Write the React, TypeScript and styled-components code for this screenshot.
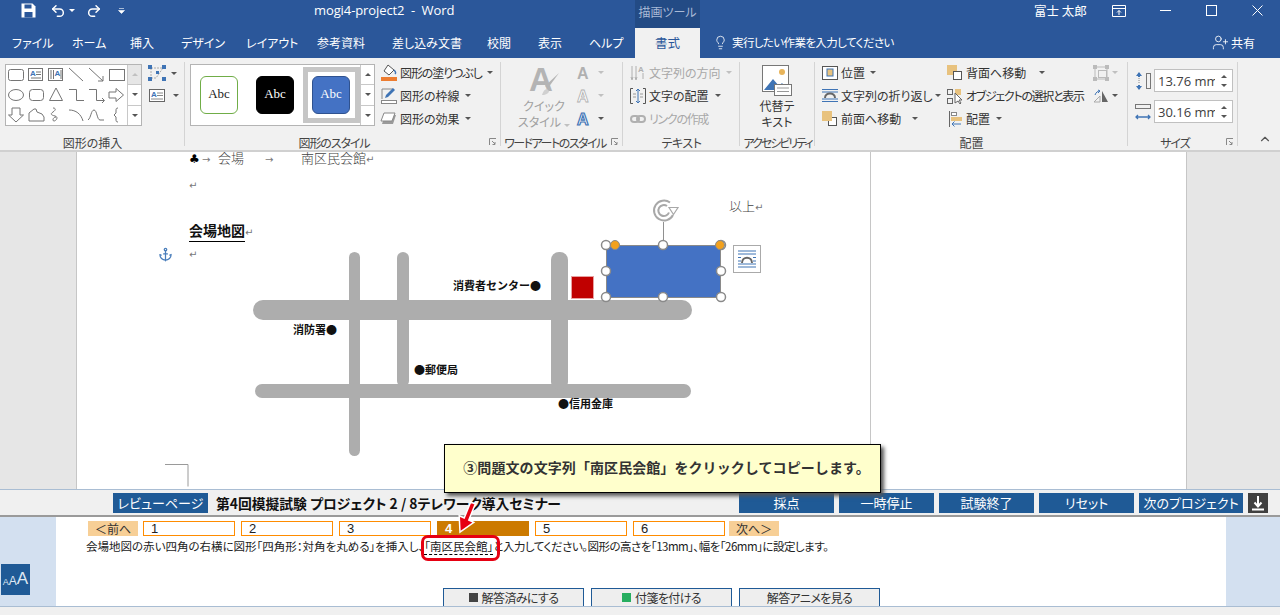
import { ReactNode } from 'react'
import styled, { createGlobalStyle } from 'styled-components'
import { Anchor, Lightbulb, ChevronUp, UserPlus, Undo2, Redo2 } from 'lucide-react'

const GlobalStyle = createGlobalStyle`
  html, body { margin: 0; padding: 0; background: #fff; }
  body { font-family: "Noto Sans CJK JP", "Noto Sans", sans-serif; }
  * { box-sizing: border-box; }
`

const BLUE = '#2b579a'
const NAVY = '#1f5a96'

const Root = styled.div`
  position: relative;
  width: 1280px;
  height: 615px;
  overflow: hidden;
  display: flex;
  flex-direction: column;
  font-feature-settings: "palt";
`

/* title bar */
const TitleBar = styled.div`
  position: relative;
  height: 28px;
  background: ${BLUE};
  color: #fff;
  display: flex;
  align-items: flex-start;
  padding-left: 21px;
  flex-shrink: 0;
`
const QuickIcon = styled.span<{ $w: number }>`
  width: ${(p) => p.$w}px;
  height: 21px;
  display: flex;
  align-items: center;
  color: #fff;
  flex-shrink: 0;
`
const DocTitle = styled.div`
  margin-left: 189px;
  width: 321px;
  height: 21px;
  line-height: 21px;
  font-family: "Open Sans", sans-serif;
  font-size: 13px;
  letter-spacing: -0.1px;
  white-space: pre;
`
const ContextTab = styled.div`
  width: 65px;
  height: 28px;
  padding-bottom: 6px;
  background: #234b85;
  color: #a9bad6;
  font-size: 12px;
  display: flex;
  align-items: center;
  justify-content: center;
`
const UserName = styled.div`
  margin-left: 334px;
  width: 62px;
  height: 21px;
  line-height: 21px;
  font-size: 12.5px;
`
const WindowButton = styled.span`
  width: 46px;
  height: 21px;
  display: flex;
  align-items: center;
  justify-content: center;
  color: #fff;
`

/* tabs */
const TabBar = styled.div`
  height: 30px;
  background: ${BLUE};
  color: #fff;
  display: flex;
  align-items: stretch;
  font-size: 12px;
  padding-left: 12px;
  flex-shrink: 0;
`
const Tab = styled.div<{ $w: number }>`
  width: ${(p) => p.$w}px;
  padding-bottom: 2px;
  display: flex;
  align-items: center;
  white-space: nowrap;
`
const ActiveTab = styled.div`
  width: 65px;
  margin-left: -1px;
  padding-bottom: 1px;
  background: #f1f1f1;
  color: ${BLUE};
  font-size: 12.5px;
  display: flex;
  align-items: center;
  justify-content: center;
`
const TellMe = styled.div`
  margin-left: 13px;
  width: 499px;
  padding-bottom: 2px;
  display: flex;
  align-items: center;
  gap: 4px;
  font-size: 11.5px;
  letter-spacing: -0.6px;
`
const Share = styled.div`
  padding-bottom: 2px;
  display: flex;
  align-items: center;
  gap: 2px;
`

/* ribbon */
const Ribbon = styled.div`
  position: relative;
  height: 94px;
  background: #f1f1f1;
  border-bottom: 2px solid #d0d0d0;
  display: flex;
  flex-shrink: 0;
  color: #333;
  font-size: 12px;
`
const Group = styled.div<{ $w: number }>`
  position: relative;
  width: ${(p) => p.$w}px;
  padding-top: 6px;
  &::after {
    content: '';
    position: absolute;
    right: 0;
    top: 4px;
    bottom: 4px;
    width: 1px;
    background: #d4d4d4;
  }
`
const GroupBody = styled.div<{ $pad?: number }>`
  height: 68px;
  display: flex;
  padding-left: ${(p) => p.$pad ?? 0}px;
`
const GroupLabel = styled.div<{ $pr?: number; $ls?: number }>`
  position: absolute;
  left: 0;
  right: 0;
  bottom: -1px;
  height: 16px;
  line-height: 16px;
  padding-right: ${(p) => p.$pr ?? 0}px;
  letter-spacing: ${(p) => p.$ls ?? 0}px;
  text-align: center;
  font-size: 12px;
  white-space: nowrap;
  color: #444;
`
const Launcher = styled.svg`
  position: absolute;
  right: 4px;
  bottom: 4px;
`
const Gallery = styled.div<{ $w: number }>`
  width: ${(p) => p.$w}px;
  height: 62px;
  background: #fff;
  border: 1px solid #b4b4b4;
  display: flex;
`
const ShapeGrid = styled.div`
  display: grid;
  grid-template-columns: repeat(6, 20px);
  grid-auto-rows: 20px;
`
const ScrollCol = styled.div`
  margin-left: auto;
  width: 14px;
  border-left: 1px solid #c8c8c8;
  display: flex;
  flex-direction: column;
`
const ScrollBtn = styled.div<{ $off?: boolean }>`
  flex: 1;
  background: ${(p) => (p.$off ? '#e6e6e6' : '#fff')};
  border-bottom: 1px solid #c8c8c8;
  display: flex;
  align-items: center;
  justify-content: center;
  &:last-child { border-bottom: 0; }
`
const Caret = styled.i<{ $off?: boolean; $up?: boolean; $ml?: number }>`
  display: inline-block;
  width: 0;
  height: 0;
  margin-left: ${(p) => p.$ml ?? 5}px;
  border-left: 3px solid transparent;
  border-right: 3px solid transparent;
  ${(p) => (p.$up ? 'border-bottom' : 'border-top')}: 3px solid ${(p) => (p.$off ? '#c0c0c0' : '#555')};
`
const WhiteCaret = styled(Caret)`
  border-top-color: #fff;
`
const SideTools = styled.div`
  margin-left: 6px;
  display: flex;
  flex-direction: column;
  gap: 4px;
`
const SideTool = styled.div`
  display: flex;
  align-items: center;
  height: 18px;
`
const StyleCards = styled.div`
  display: flex;
  align-items: center;
  flex: 1;
  padding-left: 9px;
  gap: 18px;
`
const StyleCard = styled.div<{ $bg: string; $line: string; $fg: string; $picked?: boolean }>`
  position: relative;
  width: 38px;
  height: 38px;
  border-radius: 6px;
  background: ${(p) => p.$bg};
  border: 1px solid ${(p) => p.$line};
  color: ${(p) => p.$fg};
  font: 13px "Liberation Serif", serif;
  display: flex;
  align-items: center;
  justify-content: center;
  padding-bottom: 3px;
  &::before {
    content: '';
    box-sizing: border-box;
    display: ${(p) => (p.$picked ? 'block' : 'none')};
    position: absolute;
    left: -10px;
    top: -10px;
    width: 57px;
    height: 56px;
    border: 5px solid #c6c6c6;
  }
`
const ToolCol = styled.div<{ $ml?: number; $w?: number; $mt?: number }>`
  margin-left: ${(p) => p.$ml ?? 0}px;
  margin-top: ${(p) => p.$mt ?? -3}px;
  width: ${(p) => (p.$w ? `${p.$w}px` : 'auto')};
  display: flex;
  flex-direction: column;
`
const ToolRow = styled.div<{ $off?: boolean }>`
  height: 23px;
  display: flex;
  align-items: center;
  white-space: nowrap;
  gap: 3px;
  color: ${(p) => (p.$off ? '#a8a8a8' : '#333')};
`
const Tight = styled.span<{ $ls: number }>`
  letter-spacing: ${(p) => p.$ls}px;
`
const ToolIcon = styled.span`
  width: 16px;
  height: 18px;
  display: flex;
  align-items: center;
  justify-content: center;
  flex-shrink: 0;
`
const BigTool = styled.div<{ $w: number; $off?: boolean }>`
  width: ${(p) => p.$w}px;
  display: flex;
  flex-direction: column;
  align-items: center;
  line-height: 16px;
  text-align: center;
  color: ${(p) => (p.$off ? '#a0a0a0' : '#333')};
`
const SizeRow = styled.div`
  display: flex;
  align-items: center;
  gap: 3px;
  height: 23px;
  margin-bottom: 8px;
`
const SizeInput = styled.div`
  width: 79px;
  height: 23px;
  background: #fff;
  border: 1px solid #c0c0c0;
  padding-left: 3px;
  display: flex;
  align-items: center;
  justify-content: space-between;
  font-family: "Open Sans", sans-serif;
  font-size: 13px;
  color: #404040;
`
const SizeValue = styled.span`
  width: 57px;
  overflow: hidden;
  white-space: nowrap;
`
const Spin = styled.div`
  width: 16px;
  height: 100%;
  display: flex;
  flex-direction: column;
  justify-content: center;
  align-items: center;
  gap: 6px;
  flex-shrink: 0;
`
const Collapse = styled.span`
  position: absolute;
  right: 8px;
  bottom: 1px;
  color: #555;
`

/* document */
const DocArea = styled.div`
  position: relative;
  height: 337px;
  background: #e6e6e6;
  padding-left: 76px;
  overflow: hidden;
  flex-shrink: 0;
`
const Page = styled.div`
  width: 1111px;
  height: 100%;
  background: #fff;
  border-left: 1px solid #c6c6c6;
  border-right: 1px solid #c6c6c6;
`
const TextArea = styled.div`
  width: 794px;
  height: 100%;
  padding-left: 112px;
  border-right: 1px solid #c6c6c6;
  color: #444;
  font-size: 13px;
  font-weight: 300;
`
const DocLine = styled.div<{ $h: number; $lh?: number; $ml?: number }>`
  height: ${(p) => p.$h}px;
  line-height: ${(p) => p.$lh ?? p.$h}px;
  margin-left: ${(p) => p.$ml ?? 0}px;
  white-space: nowrap;
`
const Gap = styled.span<{ $w: number }>`
  display: inline-block;
  width: ${(p) => p.$w}px;
  font-family: "DejaVu Sans", sans-serif;
  font-size: 10px;
  color: #777;
  font-weight: 400;
`
const Club = styled(Gap)`
  font-size: 12px;
  color: #000;
`
const Mark = styled.span`
  font-family: "DejaVu Sans", sans-serif;
  font-size: 10px;
  color: #777;
  font-weight: 400;
`
const Heading = styled.span`
  font-size: 14px;
  font-weight: 700;
  color: #111;
  border-bottom: 1px solid #000;
  padding-bottom: 1px;
`
const Canvas = styled.svg`
  position: absolute;
  left: 0;
  top: 0;
`
const MapLabel = styled.text`
  font-size: 11px;
  font-weight: 700;
  font-feature-settings: normal;
  fill: #111;
`
const AnchorWrap = styled.span`
  position: absolute;
  left: 158px;
  top: 91px;
  color: #4a7ebb;
`

/* exam bar */
const ExamBar = styled.div`
  height: 28px;
  background: #f0f0f0;
  border-top: 1px solid #a9bdd3;
  border-bottom: 2px solid #9a9a9a;
  display: flex;
  align-items: center;
  padding-left: 113px;
  flex-shrink: 0;
`
const Badge = styled.div`
  width: 95px;
  height: 20px;
  background: ${NAVY};
  color: #fff;
  font-size: 13px;
  display: flex;
  align-items: center;
  justify-content: center;
`
const ExamTitle = styled.div`
  margin-left: 8px;
  width: 523px;
  font-size: 13.8px;
  font-weight: 700;
  white-space: nowrap;
  color: #111;
`
const ExamButtons = styled.div`
  display: flex;
  gap: 5px;
`
const ExamButton = styled.div<{ $w?: number }>`
  width: ${(p) => p.$w ?? 95}px;
  height: 20px;
  background: ${NAVY};
  color: #fff;
  font-size: 13px;
  white-space: nowrap;
  display: flex;
  align-items: center;
  justify-content: center;
`
const DownButton = styled.div`
  width: 20px;
  height: 20px;
  background: #404040;
  display: flex;
  align-items: center;
  justify-content: center;
`

/* question panel */
const Panel = styled.div`
  height: 90px;
  background: #d3e0f0;
  display: flex;
  flex-shrink: 0;
  border-bottom: 1px solid #a9bdd3;
`
const LeftRail = styled.div`
  width: 56px;
  padding: 47px 0 0 1px;
`
const FontButton = styled.div`
  width: 29px;
  height: 31px;
  background: ${NAVY};
  color: #dfe8f2;
  font-family: "Liberation Sans", sans-serif;
  display: flex;
  align-items: flex-end;
  justify-content: center;
  padding-bottom: 8px;
  line-height: 1;
`
const FontA = styled.span<{ $s: number }>`
  font-size: ${(p) => p.$s}px;
`
const PanelBody = styled.div`
  width: 1170px;
  background: #fff;
  padding: 4px 0 0 30px;
  display: flex;
  flex-direction: column;
`
const NavRow = styled.div`
  margin-left: 2px;
  display: flex;
  gap: 6px;
`
const NavArrow = styled.div<{ $ml?: number }>`
  width: 50px;
  height: 15px;
  margin-left: ${(p) => p.$ml ?? 0}px;
  background: #f7cf96;
  color: #333;
  font-size: 12px;
  line-height: 15px;
  text-align: center;
`
const NavItem = styled.div<{ $on?: boolean; $ml?: number }>`
  width: 92px;
  height: 15px;
  margin-left: ${(p) => p.$ml ?? 0}px;
  padding-left: 7px;
  border: 1px solid ${(p) => (p.$on ? '#cc7a00' : '#ff8c00')};
  background: ${(p) => (p.$on ? '#cc7a00' : '#fff')};
  color: ${(p) => (p.$on ? '#fff' : '#222')};
  font-family: "Liberation Sans", sans-serif;
  font-weight: ${(p) => (p.$on ? 700 : 400)};
  font-size: 13px;
  line-height: 13px;
`
const Question = styled.div`
  margin-top: 2px;
  height: 18px;
  font-size: 11.5px;
  line-height: 16px;
  color: #222;
  white-space: nowrap;
`
const CopyTarget = styled.span`
  border-bottom: 1px dashed #000;
`
const PanelActions = styled.div`
  margin-top: auto;
  margin-left: 357px;
  display: flex;
  gap: 7px;
`
const ActionButton = styled.div`
  width: 141px;
  height: 18px;
  background: #eee;
  border: 1px solid ${NAVY};
  border-bottom: 0;
  font-size: 12px;
  letter-spacing: -0.6px;
  color: #333;
  display: flex;
  align-items: center;
  justify-content: center;
  gap: 4px;
`
const Swatch = styled.i<{ $c: string }>`
  width: 9px;
  height: 9px;
  background: ${(p) => p.$c};
`
const Footer = styled.div`
  flex: 1;
  background: #f0f0f0;
`

/* overlays */
const Callout = styled.div`
  position: absolute;
  left: 444px;
  top: 444px;
  width: 437px;
  height: 49px;
  padding: 0 0 3px 8px;
  background: #ffffcc;
  border: 1px solid #000;
  box-shadow: 3px 3px 4px #555;
  font-size: 14px;
  font-weight: 700;
  font-feature-settings: normal;
  letter-spacing: 0.08px;
  color: #333;
  display: flex;
  align-items: center;
  justify-content: center;
`
const Highlight = styled.div`
  position: absolute;
  left: 421px;
  top: 535px;
  width: 79px;
  height: 26px;
  border: 3px solid #e60012;
  border-radius: 7px;
`
const Pointer = styled.svg`
  position: absolute;
  left: 450px;
  top: 495px;
`

/* drawn icons */
const S = { fill: 'none', stroke: '#757575', strokeWidth: 1 }
const BlueA = ({ x, y }: { x: number; y: number }) => (
  <text x={x} y={y} fontSize="8" fontWeight="700" fill="#3f74b5" fontFamily="Liberation Sans">A</text>
)
const Ic = ({ w = 20, h = 20, children }: { w?: number; h?: number; children: ReactNode }) => (
  <svg width={w} height={h} viewBox={`0 0 ${w} ${h}`} overflow="visible">{children}</svg>
)

const shapes: ReactNode[] = [
  <rect x="2.5" y="4.5" width="15" height="11" rx="2" {...S} />,
  <g><rect x="2.5" y="3.5" width="14" height="12" {...S} /><BlueA x={4} y={11} /><path d="M10 7h5M10 9.5h5M5 13h10" {...S} /></g>,
  <g><rect x="2.5" y="3.5" width="14" height="12" {...S} /><path d="M5 5v9M7.5 5v9M15 5v9" {...S} /><BlueA x={8.5} y={11} /></g>,
  <path d="M3 3l14 13" {...S} />,
  <path d="M3 3l14 13M17 11v5h-5" {...S} />,
  <rect x="3.5" y="4.5" width="15" height="11" {...S} />,
  <ellipse cx="10" cy="10" rx="7.5" ry="5.5" {...S} />,
  <rect x="3.5" y="4.5" width="14" height="11" rx="3" {...S} />,
  <path d="M10 3l6.500 12.500h-13z" {...S} />,
  <path d="M3 4.500h7.500v11H18" {...S} />,
  <path d="M3 4.500h7.500v11H18M16 13l2.500 2.500-2.500 2.500" {...S} />,
  <path d="M3 7h7V3.500l7.500 6.500-7.500 6.500V13H3z" {...S} />,
  <path d="M6 3v7H2.500L10 17l7.500-7H14V3z" {...S} />,
  <path d="M3 16V8l5-4h2l1 3 5 2 2 3v4z" {...S} />,
  <path d="M7 3c3 0 3 2 0 4s-2 3 2 4 1 5-1 5-1-4 2-4" {...S} />,
  <path d="M3 5c7 0 12 4 14 11" {...S} />,
  <path d="M2 15c3-2 3-10 6-10s3 10 6 10h4" {...S} />,
  <path d="M12 3c-2 0-2 1-2 3v2l-2 2 2 2v2c0 2 0 3 2 3" {...S} />,
]

const Launch = () => (
  <Launcher width="8" height="8" viewBox="0 0 8 8">
    <path d="M0.500 7V0.500H7M3 3l3 3M6 4v2.500H3.500" fill="none" stroke="#888" />
  </Launcher>
)

const Arrange = ({ up }: { up?: boolean }) => (
  <Ic w={16} h={18}>
    {up ? (
      <g><rect x="0" y="1" width="10" height="10" fill="#e8c27e" /><rect x="6.500" y="7.500" width="8" height="8" fill="#fff" stroke="#555" /></g>
    ) : (
      <g><rect x="6.500" y="7.500" width="8" height="8" fill="#fff" stroke="#555" /><rect x="0" y="1" width="10" height="10" fill="#e8c27e" /></g>
    )}
  </Ic>
)

const wrapIcon = (
  <g>
    <path d="M0 2.500h16M0 14.500h16M0 12h16M0 5h16" stroke="#3f74b5" fill="none" />
    <path d="M3 11c0-6 10-6 10 0" stroke="#666" strokeWidth="2" fill="none" />
  </g>
)

export default function App() {
  return (
    <Root>
      <GlobalStyle />
      <TitleBar>
        <QuickIcon $w={29}>
          <Ic w={15} h={15}>
            <path d="M0.500 0.500h11l3 3v11H0.500z" fill="#fff" />
            <rect x="3.500" y="1.500" width="7" height="4" fill={BLUE} />
            <rect x="3.500" y="9" width="8" height="5.500" fill={BLUE} />
          </Ic>
        </QuickIcon>
        <QuickIcon $w={19}><Undo2 size={16} strokeWidth={2.2} /></QuickIcon>
        <QuickIcon $w={17}><WhiteCaret $ml={0} /></QuickIcon>
        <QuickIcon $w={32}><Redo2 size={16} strokeWidth={2.2} /></QuickIcon>
        <QuickIcon $w={7}>
          <Ic w={7} h={6}><path d="M1 0.500h5M0.500 2.500h6l-3 3z" fill="#fff" stroke="#fff" strokeWidth="0.600" /></Ic>
        </QuickIcon>
        <DocTitle>{'mogi4-project2  -  Word'}</DocTitle>
        <ContextTab>描画ツール</ContextTab>
        <UserName>富士 太郎</UserName>
        <WindowButton>
          <Ic w={14} h={12}><path d="M0.500 0.500h13v11H0.500zM0.500 3.500h13M7 10V5.500M5 7.500l2-2 2 2" fill="none" stroke="#fff" /></Ic>
        </WindowButton>
        <WindowButton>
          <Ic w={11} h={11}><path d="M0 5.500h11" stroke="#fff" /></Ic>
        </WindowButton>
        <WindowButton>
          <Ic w={11} h={11}><rect x="0.500" y="0.500" width="10" height="10" fill="none" stroke="#fff" /></Ic>
        </WindowButton>
        <WindowButton>
          <Ic w={11} h={11}><path d="M0.500 0.500l10 10M10.500 0.500l-10 10" stroke="#fff" /></Ic>
        </WindowButton>
      </TitleBar>

      <TabBar>
        <Tab $w={60}>ファイル</Tab>
        <Tab $w={58}>ホーム</Tab>
        <Tab $w={51}>挿入</Tab>
        <Tab $w={65}>デザイン</Tab>
        <Tab $w={71}>レイアウト</Tab>
        <Tab $w={75}>参考資料</Tab>
        <Tab $w={95}>差し込み文書</Tab>
        <Tab $w={51}>校閲</Tab>
        <Tab $w={51}>表示</Tab>
        <Tab $w={47}>ヘルプ</Tab>
        <ActiveTab>書式</ActiveTab>
        <TellMe>
          <Lightbulb size={15} strokeWidth={1.300} />
          実行したい作業を入力してください
        </TellMe>
        <Share>
          <UserPlus size={17} strokeWidth={1.200} />
          共有
        </Share>
      </TabBar>

      <Ribbon>
        <Group $w={185}>
          <GroupBody $pad={5}>
            <Gallery $w={137}>
              <ShapeGrid>
                {shapes.map((s, i) => (
                  <Ic key={i}>{s}</Ic>
                ))}
              </ShapeGrid>
              <ScrollCol>
                <ScrollBtn $off><Caret $up $off $ml={0} /></ScrollBtn>
                <ScrollBtn><Caret $ml={0} /></ScrollBtn>
                <ScrollBtn><Caret $ml={0} /></ScrollBtn>
              </ScrollCol>
            </Gallery>
            <SideTools>
              <SideTool>
                <Ic w={18} h={16}>
                  <path d="M3 3h12M3 13h5l7-10M3 3v10" fill="none" stroke="#aaa" strokeDasharray="2 1" />
                  <g fill="#3f74b5"><rect x="0" y="0" width="4" height="4" /><rect x="14" y="0" width="4" height="4" /><rect x="0" y="12" width="4" height="4" /><rect x="14" y="12" width="4" height="4" /><rect x="8" y="6" width="3" height="3" /></g>
                </Ic>
                <Caret />
              </SideTool>
              <SideTool>
                <Ic w={18} h={16}>
                  <rect x="1.500" y="2.500" width="15" height="12" fill="#fff" stroke="#666" />
                  <BlueA x={3} y={10} />
                  <path d="M9 6h6M9 8.500h6M3 12h12" stroke="#888" />
                </Ic>
                <Caret $ml={7} />
              </SideTool>
            </SideTools>
          </GroupBody>
          <GroupLabel>図形の挿入</GroupLabel>
        </Group>

        <Group $w={316}>
          <GroupBody $pad={5}>
            <Gallery $w={185}>
              <StyleCards>
                <StyleCard $bg="#fff" $line="#70ad47" $fg="#222">Abc</StyleCard>
                <StyleCard $bg="#000" $line="#000" $fg="#fff">Abc</StyleCard>
                <StyleCard $bg="#4472c4" $line="#2f528f" $fg="#fff" $picked>Abc</StyleCard>
              </StyleCards>
              <ScrollCol>
                <ScrollBtn><Caret $up $ml={0} /></ScrollBtn>
                <ScrollBtn><Caret $ml={0} /></ScrollBtn>
                <ScrollBtn><Caret $ml={0} /></ScrollBtn>
              </ScrollCol>
            </Gallery>
            <ToolCol $ml={6}>
              <ToolRow>
                <ToolIcon>
                  <Ic w={16} h={18}>
                    <path d="M7 1l6 5-5 5-5-4z" fill="#fff" stroke="#555" />
                    <path d="M13 6c2 2 2 3 1 4" fill="none" stroke="#3f74b5" strokeWidth="1.500" />
                    <rect x="0" y="13" width="16" height="4" fill="#ed7d31" />
                  </Ic>
                </ToolIcon>
                <Tight $ls={-1.1}>図形の塗りつぶし</Tight><Caret $ml={2} />
              </ToolRow>
              <ToolRow>
                <ToolIcon>
                  <Ic w={16} h={18}>
                    <path d="M1 12V2h11" fill="none" stroke="#888" />
                    <path d="M4 11l1-3 7-7 2 2-7 7z" fill="#3f74b5" />
                    <rect x="0.500" y="13.500" width="15" height="3" fill="#fff" stroke="#888" />
                  </Ic>
                </ToolIcon>
                図形の枠線<Caret $ml={2} />
              </ToolRow>
              <ToolRow>
                <ToolIcon>
                  <Ic w={16} h={18}>
                    <path d="M4 5h11l-3 9H1z" fill="#9a9a9a" />
                    <path d="M3 3h11l-3 8H0z" fill="#fff" stroke="#888" />
                  </Ic>
                </ToolIcon>
                図形の効果<Caret $ml={2} />
              </ToolRow>
            </ToolCol>
          </GroupBody>
          <GroupLabel $pr={18} $ls={-1.1}>図形のスタイル</GroupLabel>
          <Launch />
        </Group>

        <Group $w={122}>
          <GroupBody $pad={15}>
            <BigTool $w={56} $off>
              <Ic w={32} h={34}>
                <text x="1" y="27" fontSize="33" fontWeight="700" fill="#b4b4b4" fontFamily="Liberation Sans">A</text>
                <path d="M31 9L20 24l-3-2z" fill="#b4b4b4" />
                <path d="M19 25c-2 0-4 2-5 6 4 0 7-2 7-4z" fill="#d0d0d0" />
              </Ic>
              <span>クイック</span>
              <span>スタイル<Caret $off $ml={3} /></span>
            </BigTool>
            <ToolCol $ml={3}>
              <ToolRow><ToolIcon><Ic w={14} h={16}><text x="1" y="14" fontSize="16" fontWeight="700" fill="#b0b0b0" fontFamily="Liberation Sans">A</text></Ic></ToolIcon><Caret $off $ml={4} /></ToolRow>
              <ToolRow><ToolIcon><Ic w={14} h={16}><text x="1" y="14" fontSize="16" fontWeight="700" fill="#fff" stroke="#b0b0b0" strokeWidth="0.800" fontFamily="Liberation Sans">A</text></Ic></ToolIcon><Caret $off $ml={4} /></ToolRow>
              <ToolRow><ToolIcon><Ic w={14} h={16}><text x="1" y="14" fontSize="16" fontWeight="700" fill="#fff" stroke="#3f74b5" strokeWidth="1.200" fontFamily="Liberation Sans">A</text></Ic></ToolIcon><Caret $ml={4} /></ToolRow>
            </ToolCol>
          </GroupBody>
          <GroupLabel $pr={14} $ls={-1.5}>ワードアートのスタイル</GroupLabel>
          <Launch />
        </Group>

        <Group $w={117}>
          <GroupBody $pad={7}>
            <ToolCol>
              <ToolRow $off>
                <ToolIcon>
                  <Ic w={16} h={18}><path d="M2 2v13M6 2v13M13 9v6M1 13l1 3 1-3M5 13l1 3 1-3" fill="none" stroke="#b0b0b0" /><text x="8" y="8" fontSize="8" fontWeight="700" fill="#b0b0b0" fontFamily="Liberation Sans">A</text></Ic>
                </ToolIcon>
                文字列の方向<Caret $off $ml={2} />
              </ToolRow>
              <ToolRow>
                <ToolIcon>
                  <Ic w={16} h={18}><path d="M3 1.500H0.500v15H3M13 1.500h2.500v15H13" fill="none" stroke="#555" /><path d="M8 2v14M6 4l2-2 2 2M6 14l2 2 2-2" fill="none" stroke="#3f74b5" /><path d="M3 7h3M10 7h3M3 10h3M10 10h3" stroke="#999" /></Ic>
                </ToolIcon>
                文字の配置<Caret $ml={3} />
              </ToolRow>
              <ToolRow $off>
                <ToolIcon>
                  <Ic w={16} h={18}><rect x="1" y="6" width="8" height="6" rx="3" fill="none" stroke="#b0b0b0" strokeWidth="2" /><rect x="7" y="6" width="8" height="6" rx="3" fill="none" stroke="#b0b0b0" strokeWidth="2" /></Ic>
                </ToolIcon>
                <Tight $ls={-1.3}>リンクの作成</Tight>
              </ToolRow>
            </ToolCol>
          </GroupBody>
          <GroupLabel $ls={-0.4}>テキスト</GroupLabel>
        </Group>

        <Group $w={75}>
          <GroupBody>
            <BigTool $w={74}>
              <Ic w={32} h={34}>
                <rect x="1.500" y="1.500" width="26" height="26" fill="#fff" stroke="#777" />
                <circle cx="21" cy="8" r="3" fill="#e8b45a" />
                <path d="M3 26l9-11 6 7 3-3 5 6v1H3z" fill="#3f74b5" />
                <rect x="13.500" y="20.500" width="17" height="11" fill="#fff" stroke="#777" />
                <path d="M16 24h12M16 27.500h12" stroke="#999" />
              </Ic>
              <span>代替テ</span>
              <span>キスト</span>
            </BigTool>
          </GroupBody>
          <GroupLabel $ls={-2}>アクセシビリティ</GroupLabel>
        </Group>

        <Group $w={313}>
          <GroupBody $pad={7}>
            <ToolCol $w={125}>
              <ToolRow>
                <ToolIcon><Ic w={16} h={18}><rect x="0.500" y="2.500" width="15" height="13" fill="#fff" stroke="#555" /><rect x="5" y="5" width="6" height="7" fill="#e8c27e" stroke="#3f74b5" /></Ic></ToolIcon>
                位置<Caret $ml={2} />
              </ToolRow>
              <ToolRow>
                <ToolIcon><Ic w={16} h={18}>{wrapIcon}</Ic></ToolIcon>
                文字列の折り返し<Caret $ml={-1} />
              </ToolRow>
              <ToolRow>
                <ToolIcon><Arrange /></ToolIcon>
                前面へ移動<Caret $ml={8} />
              </ToolRow>
            </ToolCol>
            <ToolCol $w={146}>
              <ToolRow>
                <ToolIcon><Arrange up /></ToolIcon>
                背面へ移動<Caret $ml={10} />
              </ToolRow>
              <ToolRow>
                <ToolIcon>
                  <Ic w={16} h={18}>
                    <rect x="0.500" y="2.500" width="5" height="5" fill="none" stroke="#666" />
                    <rect x="0.500" y="11.500" width="5" height="5" fill="none" stroke="#666" />
                    <rect x="8" y="2" width="6" height="6" fill="#e8c27e" />
                    <path d="M8 6v10l3-2 2 3 1-1-2-3h3z" fill="#fff" stroke="#666" />
                  </Ic>
                </ToolIcon>
                <Tight $ls={-1.3}>オブジェクトの選択と表示</Tight>
              </ToolRow>
              <ToolRow>
                <ToolIcon>
                  <Ic w={16} h={18}>
                    <path d="M2.500 1v16" stroke="#666" />
                    <rect x="4.500" y="2.500" width="5" height="3" fill="#fff" stroke="#888" />
                    <rect x="4" y="7" width="11" height="4" fill="#e8c27e" />
                    <path d="M14 14H5M7.500 11.500L5 14l2.500 2.500" fill="none" stroke="#3f74b5" />
                  </Ic>
                </ToolIcon>
                配置<Caret $ml={3} />
              </ToolRow>
            </ToolCol>
            <ToolCol>
              <ToolRow $off>
                <ToolIcon>
                  <Ic w={16} h={18}><rect x="2" y="3" width="12" height="12" fill="none" stroke="#bbb" /><rect x="5.500" y="6.500" width="8" height="7" fill="none" stroke="#bbb" /><g fill="#bbb"><rect x="0" y="1" width="4" height="4" /><rect x="12" y="1" width="4" height="4" /><rect x="0" y="13" width="4" height="4" /><rect x="12" y="13" width="4" height="4" /></g></Ic>
                </ToolIcon>
                <Caret $off $ml={0} />
              </ToolRow>
              <ToolRow>
                <ToolIcon>
                  <Ic w={16} h={18}><path d="M1 15L7 9v6z" fill="none" stroke="#aaa" /><path d="M9 4l6 11H9z" fill="#666" /><path d="M2 8c1-3 3-4 5-4M5 3l2 1-2 2" fill="none" stroke="#3f74b5" /></Ic>
                </ToolIcon>
                <Caret $ml={0} />
              </ToolRow>
            </ToolCol>
          </GroupBody>
          <GroupLabel>配置</GroupLabel>
        </Group>

        <Group $w={110}>
          <GroupBody $pad={7}>
            <ToolCol $mt={5}>
              <SizeRow>
                <Ic w={16} h={22}>
                  <path d="M4 3v4M4 15v4" stroke="#3f74b5" strokeWidth="2" />
                  <path d="M1 6l3-4 3 4zM1 16l3 4 3-4z" fill="#3f74b5" />
                  <path d="M4 8v6" stroke="#888" strokeDasharray="1 1" />
                  <rect x="11.500" y="3.500" width="4" height="15" fill="none" stroke="#777" />
                </Ic>
                <SizeInput><SizeValue>13.76 mm</SizeValue><Spin><Caret $up $ml={0} /><Caret $ml={0} /></Spin></SizeInput>
              </SizeRow>
              <SizeRow>
                <Ic w={16} h={22}>
                  <rect x="0.500" y="3.500" width="15" height="4" fill="none" stroke="#777" />
                  <path d="M1 16h14M3 14l-2 2 2 2M13 14l2 2-2 2" fill="none" stroke="#3f74b5" strokeWidth="1.300" />
                </Ic>
                <SizeInput><SizeValue>30.16 mm</SizeValue><Spin><Caret $up $ml={0} /><Caret $ml={0} /></Spin></SizeInput>
              </SizeRow>
            </ToolCol>
          </GroupBody>
          <GroupLabel $pr={16} $ls={-1}>サイズ</GroupLabel>
          <Launch />
        </Group>
        <Collapse><ChevronUp size={14} strokeWidth={2} /></Collapse>
      </Ribbon>

      <DocArea>
        <Page>
          <TextArea>
            <DocLine $h={20} $lh={12}>
              <Club $w={13}>♣</Club>
              <Gap $w={16}>→</Gap>
              <span>会場</span>
              <Gap $w={21} />
              <Gap $w={36}>→</Gap>
              <span>南区民会館</span>
              <Mark>↵</Mark>
            </DocLine>
            <DocLine $h={24}><Mark>↵</Mark></DocLine>
            <DocLine $h={20} $ml={540}>以上<Mark>↵</Mark></DocLine>
            <DocLine $h={28}><Heading>会場地図</Heading><Mark>↵</Mark></DocLine>
            <DocLine $h={18}><Mark>↵</Mark></DocLine>
          </TextArea>
        </Page>
        <Canvas width="1280" height="337" viewBox="0 152 1280 337">
          <g fill="#adadad">
            <rect x="253" y="300" width="439" height="20" rx="10" />
            <rect x="255" y="384" width="436" height="14" rx="7" />
            <rect x="349" y="252" width="11" height="204" rx="5.500" />
            <rect x="397" y="252" width="12" height="135" rx="6" />
            <rect x="551" y="252" width="17" height="138" rx="8" />
          </g>
          <rect x="571.500" y="276.500" width="22" height="22" fill="#c00000" stroke="#e8a0a0" />
          <MapLabel x="453" y="290">消費者センター●</MapLabel>
          <MapLabel x="293" y="334">消防署●</MapLabel>
          <MapLabel x="414" y="374">●郵便局</MapLabel>
          <MapLabel x="558" y="408">●信用金庫</MapLabel>

          <path d="M663.500 222v23" stroke="#909090" />
          <rect x="606.500" y="245.500" width="114" height="52" rx="1.500" fill="#4472c4" stroke="#2f528f" />
          <path d="M606.500 245.500h114v52M606.500 245.500v52h114" fill="none" stroke="#8a8a8a" />
          {[[606, 245], [663, 245], [721, 245], [606, 271], [721, 271], [606, 297], [663, 297], [721, 297]].map(([x, y]) => (
            <circle key={`${x}-${y}`} cx={x} cy={y} r="4.500" fill="#fff" stroke="#8a8a8a" strokeWidth="1.500" />
          ))}
          {[615, 720].map((x) => (
            <circle key={x} cx={x} cy="245" r="4.500" fill="#f2a11e" stroke="#8a8a8a" />
          ))}
          <path d="M670 202.500a10 10 0 1 0 3 12.500" fill="none" stroke="#a8a8a8" strokeWidth="2" />
          <path d="M667 206a5.500 5.500 0 1 0 2 6.500" fill="none" stroke="#a8a8a8" strokeWidth="2" />
          <path d="M669 207.500h9l-4.500 7z" fill="#fff" stroke="#a8a8a8" strokeWidth="1.200" />

          <rect x="733.500" y="245.500" width="27" height="27" fill="#fff" stroke="#aaa" />
          <path d="M738 251h18M738 254h18M738 264h18M738 267h18" stroke="#3f74b5" />
          <path d="M738 257.500h3M753 257.500h3M738 261h3M753 261h3" stroke="#3f74b5" />
          <path d="M742 263c0-7 10-7 10 0" fill="none" stroke="#666" strokeWidth="2" />

          <path d="M165 464.500h23v22" fill="none" stroke="#9a9a9a" />
        </Canvas>
        <AnchorWrap><Anchor size={15} strokeWidth={2} /></AnchorWrap>
      </DocArea>

      <ExamBar>
        <Badge>レビューページ</Badge>
        <ExamTitle>第4回模擬試験 プロジェクト 2 / 8テレワーク導入セミナー</ExamTitle>
        <ExamButtons>
          <ExamButton>採点</ExamButton>
          <ExamButton>一時停止</ExamButton>
          <ExamButton>試験終了</ExamButton>
          <ExamButton>リセット</ExamButton>
          <ExamButton $w={104}>次のプロジェクト</ExamButton>
          <DownButton>
            <Ic w={12} h={16}><path d="M6 1v9M2.500 7.500L6 11.500l3.500-4M0 14.500h12" fill="none" stroke="#fff" strokeWidth="2" /></Ic>
          </DownButton>
        </ExamButtons>
      </ExamBar>

      <Panel>
        <LeftRail>
          <FontButton>
            <FontA $s={9}>A</FontA>
            <FontA $s={12}>A</FontA>
            <FontA $s={17}>A</FontA>
          </FontButton>
        </LeftRail>
        <PanelBody>
          <NavRow>
            <NavArrow>＜前へ</NavArrow>
            <NavItem $ml={-1}>1</NavItem>
            <NavItem>2</NavItem>
            <NavItem>3</NavItem>
            <NavItem $on>4</NavItem>
            <NavItem>5</NavItem>
            <NavItem>6</NavItem>
            <NavArrow $ml={-2}>次へ＞</NavArrow>
          </NavRow>
          <Question>
            会場地図の赤い四角の右横に図形「四角形：対角を丸める」を挿入し、<CopyTarget>「南区民会館」</CopyTarget>
            <Tight $ls={-0.5}>と入力してください。図形の高さを「13mm」、幅を「26mm」に設定します。</Tight>
          </Question>
          <PanelActions>
            <ActionButton><Swatch $c="#444" />解答済みにする</ActionButton>
            <ActionButton><Swatch $c="#27ae60" />付箋を付ける</ActionButton>
            <ActionButton>解答アニメを見る</ActionButton>
          </PanelActions>
        </PanelBody>
      </Panel>
      <Footer />

      <Callout>③問題文の文字列「南区民会館」をクリックしてコピーします。</Callout>
      <Highlight />
      <Pointer width="32" height="42" viewBox="0 0 32 42">
        <path d="M25.300 9L18.800 25L23.800 27.300L10 37L9.200 20.700L14.200 23L20.700 7Z" fill="#e60012" stroke="#fff" strokeWidth="1.500" />
      </Pointer>
    </Root>
  )
}
